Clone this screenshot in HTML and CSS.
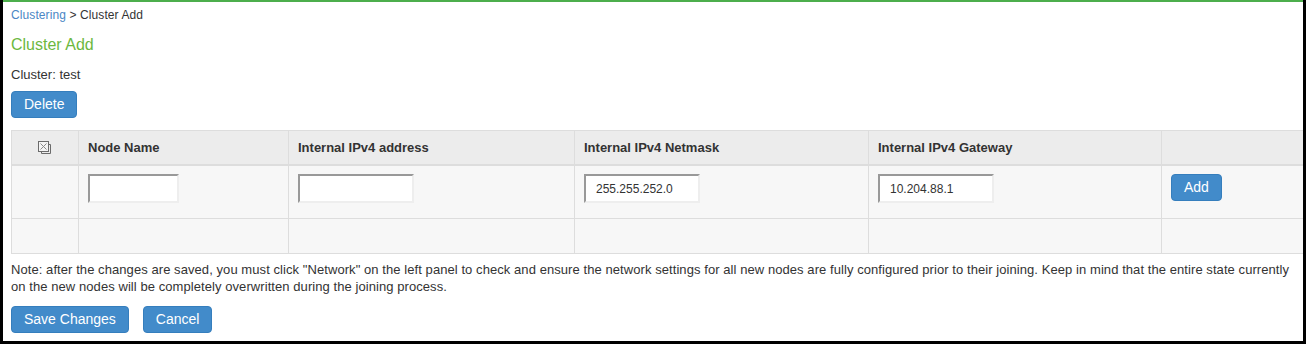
FILE: index.html
```html
<!DOCTYPE html>
<html>
<head>
<meta charset="utf-8">
<link rel="stylesheet" href="styles.css">
</head>
<body>
<div class="page">
  <div class="breadcrumb"><a class="crumb-link">Clustering</a> &gt; Cluster Add</div>
  <h2 class="title">Cluster Add</h2>
  <div class="cluster-label">Cluster: test</div>
  <div class="toolbar"><button class="btn">Delete</button></div>
  <table class="grid">
    <colgroup>
      <col class="c1"><col class="c2"><col class="c3"><col class="c4"><col class="c5"><col class="c6">
    </colgroup>
    <thead>
      <tr>
        <th class="icon-cell">
          <svg width="14" height="14" viewBox="0 0 14 14" class="sel-icon">
            <path d="M3.5 10.5 V12.5 H12.5 V3.5 H10.5" fill="none" stroke="#6b6b6b" stroke-width="1"/>
            <rect x="0.5" y="0.5" width="10" height="10" fill="#f4f4f4" stroke="#6b6b6b" stroke-width="1"/>
            <path d="M2.5 2.5 L8.5 8.5 M8.5 2.5 L2.5 8.5" stroke="#8a8a8a" stroke-width="1"/>
          </svg>
        </th>
        <th>Node Name</th>
        <th>Internal IPv4 address</th>
        <th>Internal IPv4 Netmask</th>
        <th>Internal IPv4 Gateway</th>
        <th></th>
      </tr>
    </thead>
    <tbody>
      <tr class="entry-row">
        <td></td>
        <td><input class="field field-short" type="text" value=""></td>
        <td><input class="field" type="text" value=""></td>
        <td><input class="field" type="text" value="255.255.252.0"></td>
        <td><input class="field" type="text" value="10.204.88.1"></td>
        <td><button class="btn">Add</button></td>
      </tr>
      <tr class="empty-row">
        <td></td><td></td><td></td><td></td><td></td><td></td>
      </tr>
    </tbody>
  </table>
  <p class="note">Note: after the changes are saved, you must click "Network" on the left panel to check and ensure the network settings for all new nodes are fully configured prior to their joining. Keep in mind that the entire state currently on the new nodes will be completely overwritten during the joining process.</p>
  <div class="actions">
    <button class="btn">Save Changes</button>
    <button class="btn">Cancel</button>
  </div>
</div>
</body>
</html>
```
FILE: styles.css
```css
html, body {
  margin: 0;
  padding: 0;
  background: #000;
  height: 344px;
  overflow: hidden;
}
.page {
  margin: 0 3px;
  background: #fff;
  border-top: 2px solid #4cae4c;
  padding: 5px 0 0 8px;
  box-sizing: border-box;
  height: 341px;
  overflow: hidden;
  font-family: "Liberation Sans", Arial, sans-serif;
  color: #333;
  font-size: 12px;
  line-height: 17px;
}
.breadcrumb {
  font-size: 12px;
  line-height: 17px;
  letter-spacing: 0.1px;
}
.crumb-link {
  color: #4a86c5;
  text-decoration: none;
}
.title {
  margin: 10px 0 0;
  font-size: 16px;
  line-height: 22px;
  font-weight: normal;
  color: #6cb83e;
}
.cluster-label {
  margin-top: 10px;
  font-size: 13px;
  line-height: 18px;
}
.toolbar {
  margin-top: 7px;
  display: flex;
}
.btn {
  font-family: "Liberation Sans", Arial, sans-serif;
  font-size: 14px;
  line-height: 17px;
  height: 27px;
  padding: 4px 12px;
  color: #fff;
  background: #428bca;
  border: 1px solid #357ebd;
  border-radius: 4px;
  cursor: pointer;
}
.grid {
  margin-top: 12px;
  border-collapse: collapse;
  table-layout: fixed;
  width: 1300px;
  background: #f7f7f7;
}
.c1 { width: 67px; }
.c2 { width: 210px; }
.c3 { width: 286px; }
.c4 { width: 294px; }
.c5 { width: 293px; }
.grid th, .grid td {
  border: 1px solid #ddd;
  padding: 8px 9px;
  text-align: left;
  vertical-align: top;
}
.grid th {
  background: #ececec;
  font-size: 13px;
  line-height: 17px;
  height: 34px;
  box-sizing: border-box;
  font-weight: bold;
  border-bottom: 2px solid #ddd;
  color: #333;
}
.grid th.icon-cell {
  text-align: center;
  padding-top: 10px;
  padding-bottom: 6px;
}
.sel-icon {
  display: block;
  margin: 0 auto;
}
.entry-row td {
  height: 53px;
  padding-top: 8px;
  padding-bottom: 0;
  box-sizing: border-box;
}
.empty-row td {
  height: 35px;
  box-sizing: border-box;
}
.field {
  display: block;
  box-sizing: border-box;
  width: 116px;
  height: 29px;
  padding: 0 10px;
  border: 2px solid;
  border-color: #999 #eee #eee #999;
  background: #fff;
  font-family: "Liberation Sans", Arial, sans-serif;
  font-size: 12px;
  color: #333;
  outline: none;
}
.field-short {
  width: 91px;
}
.note {
  margin: 7px 0 0;
  padding-right: 0;
  font-size: 13px;
  letter-spacing: 0.07px;
  line-height: 17px;
}
.actions {
  margin-top: 11px;
  display: flex;
  gap: 14px;
}
```
